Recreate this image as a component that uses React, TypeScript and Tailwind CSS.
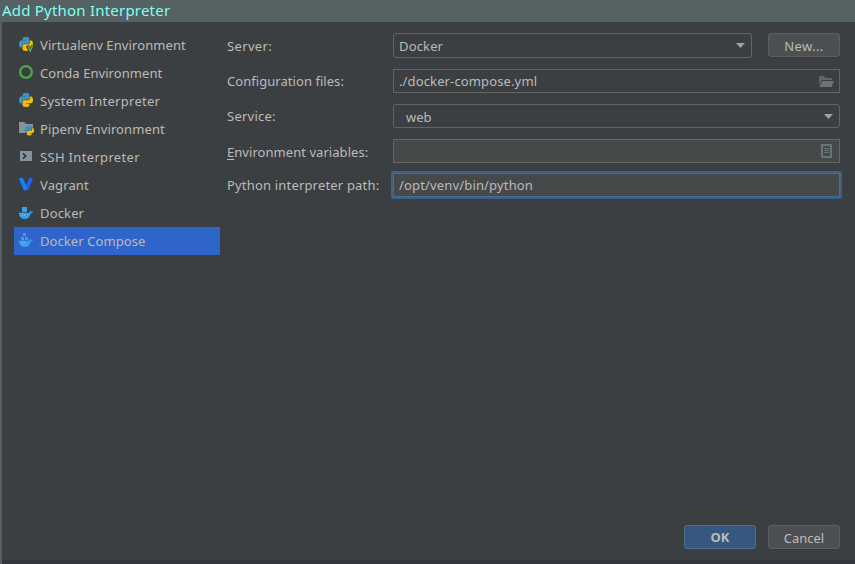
import type { ReactNode } from "react";

const SNAKE =
  "M14.25.18l.9.2.73.26.59.3.45.32.34.34.25.34.16.33.1.3.04.26.02.2-.01.13V8.5l-.05.63-.13.55-.21.46-.26.38-.3.31-.33.25-.35.19-.35.14-.33.1-.3.07-.26.04-.21.02H8.77l-.69.05-.59.14-.5.22-.41.27-.33.32-.27.35-.2.36-.15.37-.1.35-.07.32-.04.27-.02.21v3.06H3.17l-.21-.03-.28-.07-.32-.12-.35-.18-.36-.26-.36-.36-.35-.46-.32-.59-.28-.73-.21-.88-.14-1.05-.05-1.23.06-1.22.16-1.04.24-.87.32-.71.36-.57.4-.44.42-.33.42-.24.4-.16.36-.1.32-.05.24-.01h.16l.06.01h8.16v-.83H6.18l-.01-2.75-.02-.37.05-.34.11-.31.17-.28.25-.26.31-.23.38-.2.44-.18.51-.15.58-.12.64-.1.71-.06.77-.04.84-.02 1.27.05z";

function Snakes({ transform }: { transform: string }) {
  return (
    <g transform={transform}>
      <path d={SNAKE} fill="#3e93c6" />
      <path d={SNAKE} fill="#f5bd0b" transform="rotate(180 12 12)" />
    </g>
  );
}

function Icon({ children }: { children: ReactNode }) {
  return (
    <svg className="size-4 shrink-0" viewBox="0 0 16 16">
      {children}
    </svg>
  );
}

const Whale = () => (
  <>
    <path
      d="M1 7.800h10.500c.5-.5.6-1.600.1-2.800.9.4 1.400 1 1.600 1.700.7-.1 1.300 0 2 .3-.4.9-1.300 1.400-2.500 1.400-.9 3.600-3 5.600-6.200 5.600C3 14 1 11.800 1 7.800z"
      fill="#36a1ee"
    />
    <circle cx="5.400" cy="9.600" r="1.200" fill="#2d7cc4" stroke="#8cc8f5" strokeWidth=".7" />
  </>
);

const items: { label: string; tracking: string; icon: ReactNode }[] = [
  {
    label: "Virtualenv Environment",
    tracking: "tracking-[0.1px]",
    icon: (
      <>
        <Snakes transform="translate(1 0) scale(.58)" />
        <path d="M9.500 8.500l2.700 6.200 2.700-6.200" fill="none" stroke="#3c3f41" strokeWidth="3.200" />
        <path d="M10 9l2.200 5.200L14.500 9" fill="none" stroke="#62b543" strokeWidth="1.300" />
      </>
    ),
  },
  {
    label: "Conda Environment",
    tracking: "tracking-[0.06px]",
    icon: (
      <>
        <circle cx="8" cy="7" r="5.900" fill="none" stroke="#4dac45" strokeWidth="2.400" />
        <circle cx="8" cy="7" r="6.500" fill="none" stroke="#3c3f41" strokeWidth="1.200" strokeDasharray=".5 1.700" opacity=".6" />
      </>
    ),
  },
  { label: "System Interpreter", tracking: "tracking-[0.28px]", icon: <Snakes transform="translate(1 0) scale(.58)" /> },
  {
    label: "Pipenv Environment",
    tracking: "tracking-[0.1px]",
    icon: (
      <>
        <path d="M1 1h5l2 2h7v5H9v4H1z" fill="#87939a" />
        <circle cx="11.500" cy="9.700" r="4.600" fill="#3c3f41" opacity=".5" />
        <Snakes transform="translate(6.500 4.800) scale(.4)" />
      </>
    ),
  },
  {
    label: "SSH Interpreter",
    tracking: "tracking-[0.33px]",
    icon: (
      <>
        <path d="M2 2h12v10H2z" fill="#87939a" />
        <path d="M5 4.300L7.700 7 5 9.700" fill="none" stroke="#303437" strokeWidth="1.700" />
      </>
    ),
  },
  {
    label: "Vagrant",
    tracking: "tracking-[0.12px]",
    icon: (
      <>
        <path d="M1.500 1h3.300L8 8.500 11.200 1h3.300v2L10 13.200H6L1.500 3z" fill="#1668eb" />
        <path d="M1.500 1h3.300L8 8.500v4.700H6L1.500 3z" fill="#168bff" opacity=".75" />
      </>
    ),
  },
  {
    label: "Docker",
    tracking: "tracking-[0.15px]",
    icon: (
      <>
        <path d="M4 2h5v5H4z" fill="#36a1ee" />
        <Whale />
      </>
    ),
  },
  {
    label: "Docker Compose",
    tracking: "tracking-[0.08px]",
    icon: (
      <>
        <path d="M5 0h3v3H5zM3 4h3v3H3zM7 4h3v3H7z" fill="#36a1ee" />
        <Whale />
      </>
    ),
  },
];

function Arrow() {
  return (
    <svg className="h-[5px] w-[9px] shrink-0" viewBox="0 0 9 5">
      <path d="M0 0h9L4.500 5z" fill="#9da0a2" />
    </svg>
  );
}

const field = "flex items-center border border-[#646464]";

export default function App() {
  return (
    <div className="flex h-[564px] w-[855px] flex-col overflow-hidden bg-[#566164] font-['Noto_Sans',sans-serif] text-[13px] leading-[18px] text-[#bbbbbb]">
      <header className="h-[22px] pl-[2px] text-[15px] leading-[20px] tracking-[0.21px] text-[#7ffff0]">Add Python Interpreter</header>
      <main className="ml-[2px] flex h-[538px] flex-col bg-[#3c3f41]">
        <div className="flex h-[503px] pt-[9px] pl-3">
          <nav className="w-[206px]">
            {items.map((item, i) => (
              <div key={item.label} className={`flex h-7 items-center gap-[6px] pl-1 ${i === 7 ? "bg-[#2f65ca]" : ""}`}>
                <Icon>{item.icon}</Icon>
                <span className={item.tracking}>{item.label}</span>
              </div>
            ))}
          </nav>
          <section className="ml-[7px] pt-[2px]">
            <div className="flex h-[36px] items-start">
              <label className="w-[166px] pt-[4px] tracking-[0.35px]">Server:</label>
              <div className={`${field} h-[25px] w-[359px] justify-between rounded-[3px] pr-[6px] pl-[5px]`}>
                <span className="tracking-[0.15px]">Docker</span>
                <Arrow />
              </div>
              <button className="ml-4 h-6 w-[72px] rounded-[3px] border border-[#5e6060] bg-[#4c5052] pt-px tracking-[0.4px] shadow-[0_1px_0_#36393a]">New...</button>
            </div>
            <div className="flex h-[35px] items-start">
              <label className="w-[166px] pt-[3px] tracking-[0.05px]">Configuration files:</label>
              <div className={`${field} h-6 w-[447px] justify-between pr-[5px] pl-[5px]`}>
                <span className="tracking-[0.13px]">./docker-compose.yml</span>
                <svg className="h-[11px] w-[15px]" viewBox="0 0 15 11">
                  <path d="M0 0h5l1.500 2H13v2H3L0 10z" fill="#5e666a" />
                  <path d="M3.500 5H15l-2.500 6H.500z" fill="#68747a" />
                </svg>
              </div>
            </div>
            <div className="flex h-[35px] items-start">
              <label className="w-[166px] pt-[3px] tracking-[0.25px]">Service:</label>
              <div className={`${field} h-6 w-[447px] justify-between rounded-[3px] pr-[6px] pl-3`}>
                <span className="pt-[2px]">web</span>
                <Arrow />
              </div>
            </div>
            <div className="flex h-[32px] items-start">
              <label className="w-[166px] pt-[4px] tracking-[0.05px]">
                <span className="underline underline-offset-2">E</span>nvironment variables:
              </label>
              <div className={`${field} h-6 w-[447px] justify-end bg-[#45494a] pr-[7px]`}>
                <svg className="h-[14px] w-[11px]" viewBox="0 0 11 14" fill="none" stroke="#697478">
                  <path d="M1 1h9v12H1z" strokeWidth="2" />
                  <path d="M3 4.500h5M3 6.500h5M3 8.500h5" />
                </svg>
              </div>
            </div>
            <div className="flex h-7 items-center">
              <label className="w-[164px] tracking-[0.18px]">Python interpreter path:</label>
              <div className="flex h-7 w-[451px] items-center rounded-[2px] border-2 border-[#3d6185] bg-[#45494a]">
                <div className="flex h-6 w-[447px] items-center border border-[#466d94] pl-[5px] tracking-[0.16px]">/opt/venv/bin/python</div>
              </div>
            </div>
          </section>
        </div>
        <footer className="flex justify-end gap-3 pr-[15px]">
          <button className="h-6 w-[72px] rounded-[3px] border border-[#4c708c] bg-[#365880] font-bold">OK</button>
          <button className="h-6 w-[72px] rounded-[3px] border border-[#5e6060] bg-[#4c5052] pt-[2px] shadow-[0_1px_0_#36393a]">Cancel</button>
        </footer>
      </main>
      <div className="ml-[2px] h-1 bg-[#353740]" />
    </div>
  );
}
